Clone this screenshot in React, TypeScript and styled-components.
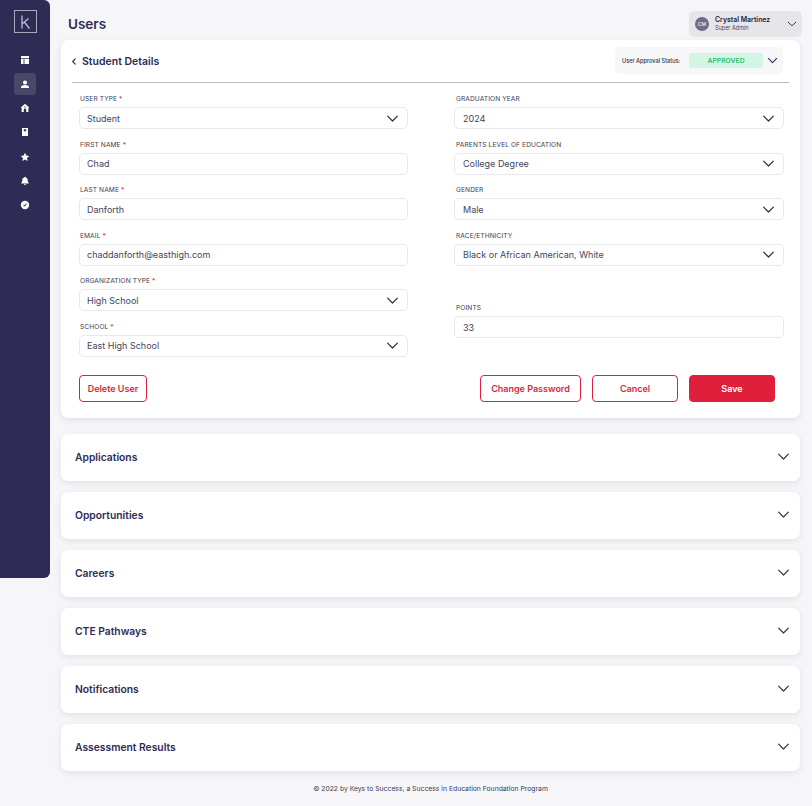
import React from "react";
import styled, { createGlobalStyle } from "styled-components";

const Global = createGlobalStyle`
  html, body { margin: 0; padding: 0; background: #f6f6f9; }
  body { font-family: Inter, "Liberation Sans", sans-serif; color: #2e2c54; }
  * { box-sizing: border-box; }
`;

const Shell = styled.div`
  display: flex;
  width: 812px;
  height: 806px;
  overflow: hidden;
`;
const Sidebar = styled.aside`
  width: 50px;
  height: 578px;
  flex: none;
  background: #2e2c54;
  border-radius: 0 6px 6px 0;
  display: flex;
  flex-direction: column;
  align-items: center;
  padding-top: 10px;
`;
const LogoBox = styled.div`
  width: 23px;
  height: 23px;
  border: 1px solid #a9a8ba;
  display: flex;
  align-items: center;
  justify-content: center;
  margin-bottom: 16px;
`;
const NavList = styled.nav`
  display: flex;
  flex-direction: column;
  align-items: center;
  gap: 1.7px;
`;
const NavItem = styled.div<{ $active?: boolean }>`
  width: 22px;
  height: 22.4px;
  border-radius: 3px;
  display: flex;
  align-items: center;
  justify-content: center;
  background: ${(p) => (p.$active ? "#4a4868" : "transparent")};
`;
const Main = styled.main`
  width: 739px;
  margin-left: 11px;
  flex: none;
  display: flex;
  flex-direction: column;
`;
const TopBar = styled.header`
  height: 40px;
  margin-right: -2px;
  display: flex;
  align-items: flex-start;
  justify-content: space-between;
  padding: 11px 0 0 7px;
`;
const PageTitle = styled.h1`
  margin: 3px 0 0;
  font-size: 13.5px;
  line-height: 20px;
  font-weight: 600;
  color: #2e2c54;
`;
const UserPill = styled.div`
  width: 113px;
  height: 26px;
  background: #e6e6ea;
  border-radius: 5px;
  display: flex;
  align-items: center;
  padding: 0 5px 0 6px;
`;
const Avatar = styled.div`
  width: 14px;
  height: 14px;
  border-radius: 50%;
  background: #6e6c88;
  color: #e6e6ea;
  font-size: 5px;
  font-weight: 600;
  display: flex;
  align-items: center;
  justify-content: center;
  margin-right: 6px;
`;
const UserText = styled.div`
  flex: 1;
  display: flex;
  flex-direction: column;
  gap: 1px;
`;
const UserName = styled.div`
  font-size: 6.9px;
  line-height: 8px;
  font-weight: 600;
  color: #1d1c33;
`;
const UserRole = styled.div`
  font-size: 5.5px;
  line-height: 7px;
  color: #44435c;
`;
const Card = styled.section`
  background: #fff;
  border-radius: 7px;
  box-shadow: 0 2px 6px rgba(40, 40, 70, 0.1);
`;
const DetailsCard = styled(Card)`
  height: 378px;
  padding: 0 11px;
`;
const CardHeader = styled.div`
  height: 43px;
  border-bottom: 1px solid #b9b8c8;
  display: flex;
  align-items: center;
  justify-content: space-between;
`;
const BackTitle = styled.div`
  display: flex;
  align-items: center;
  gap: 6px;
  font-size: 10.5px;
  font-weight: 600;
  color: #2e2c54;
`;
const ApprovalBox = styled.div`
  width: 168px;
  height: 27px;
  margin-right: 6px;
  margin-top: -1px;
  background: #f7f7f9;
  border-radius: 5px;
  display: flex;
  align-items: center;
  padding: 0 5px 0 7px;
`;
const ApprovalLabel = styled.span`
  font-size: 5.6px;
  color: #33324a;
  font-weight: 500;
  width: 67px;
  flex: none;
`;
const ApprovalBadge = styled.span`
  width: 74px;
  height: 15px;
  flex: none;
  background: #d3f5e3;
  color: #2bbf72;
  font-size: 6.8px;
  font-weight: 600;
  border-radius: 3px;
  display: flex;
  align-items: center;
  justify-content: center;
  margin-right: 4px;
`;
const FormGrid = styled.div`
  display: grid;
  grid-template-columns: 329px 330px;
  column-gap: 46px;
  padding: 11px 0 0 7px;
`;
const Column = styled.div`
  display: flex;
  flex-direction: column;
  gap: 10.6px;
`;
const Field = styled.div<{ $push?: number }>`
  margin-top: ${(p) => p.$push ?? 0}px;
`;
const Label = styled.div<{ $inset: number }>`
  height: 13px;
  padding-left: ${(p) => p.$inset}px;
  font-size: 6.6px;
  line-height: 10px;
  color: #3c3b50;
  font-weight: 400;
  letter-spacing: 0.1px;
`;
const Req = styled.span`
  color: #e01e3c;
`;
const Control = styled.div<{ $inset: number }>`
  height: 22px;
  border: 1px solid #e8e8ec;
  border-radius: 5px;
  background: #fff;
  display: flex;
  align-items: center;
  justify-content: space-between;
  padding: 0 8px 0 ${(p) => p.$inset}px;
  font-size: 9px;
  color: #45445a;
`;
const Actions = styled.div`
  display: flex;
  align-items: center;
  margin: 18px 14px 0 7px;
  gap: 11px;
`;
const Button = styled.button<{ $w: number; $solid?: boolean }>`
  width: ${(p) => p.$w}px;
  height: 27px;
  border: 1px solid #df1f3b;
  border-radius: 4px;
  background: ${(p) => (p.$solid ? "#df1f3b" : "#fff")};
  color: ${(p) => (p.$solid ? "#fff" : "#df1f3b")};
  font-family: inherit;
  font-size: 9px;
  font-weight: 600;
  padding: 0;
`;
const Spacer = styled.div`
  flex: 1;
`;
const AccordionList = styled.div`
  margin-top: 16px;
  display: flex;
  flex-direction: column;
  gap: 11px;
`;
const AccordionCard = styled(Card)`
  height: 47px;
  display: flex;
  align-items: center;
  justify-content: space-between;
  padding: 0 10px 3px 14px;
`;
const AccordionTitle = styled.div`
  font-size: 10.3px;
  font-weight: 600;
  color: #2e2c54;
  padding-top: 2px;
`;
const Footer = styled.footer`
  margin-top: 13px;
  text-align: center;
  font-size: 6.8px;
  line-height: 10px;
  color: #3c3b50;
`;

const Chevron = ({ size = 12, color = "#2e2c54" }: { size?: number; color?: string }) => (
  <svg width={size} height={size} viewBox="0 0 12 12" fill="none">
    <path d="M1.5 3.8 6 8.3l4.5-4.5" stroke={color} strokeWidth="1.2" strokeLinecap="round" strokeLinejoin="round" />
  </svg>
);

const icons: React.ReactNode[] = [
  <path key="a" d="M1 1h8v2.200H1zM1 4h2.600v5H1zM4.400 4H9v5H4.400z" />,
  <path key="b" d="M5 1.500a2 2 0 1 1 0 4A2 2 0 0 1 5 1.500zM1 8.500c0-1.600 2-2.400 4-2.400s4 .8 4 2.400V9H1z" />,
  <path key="c" fillRule="evenodd" d="M5 .8 9.200 4.400 8.600 5 8.400 4.900V9H6.200V6.800a1.200 1.200 0 0 0-2.400 0V9H1.600V4.900L1.400 5 .8 4.400zM4.300 3.400v1.200h1.400V3.400z" />,
  <path key="d" fillRule="evenodd" d="M2 1h6v8H2zM3.800 2.200v2h2.400v-2z" />,
  <path key="e" d="m5 .8 1.300 2.800 3 .3-2.300 2 .7 3L5 7.400 2.300 8.900l.7-3-2.300-2 3-.3z" />,
  <path key="f" d="M5 .8c.4 0 .7.3.7.7 1.300.3 2 1.300 2 2.600 0 1.500.4 2 1 2.800v.6H1.300v-.6c.6-.8 1-1.300 1-2.800 0-1.300.7-2.300 2-2.600 0-.4.300-.7.700-.7zM4 8h2a1 1 0 0 1-2 0z" />,
  <path key="g" fillRule="evenodd" d="M5 .8a4.200 4.200 0 1 1 0 8.400A4.200 4.200 0 0 1 5 .8zM3.200 5 4.600 6.400 7 3.900 6.400 3.400 4.600 5.200 3.700 4.400z" />,
];

const leftFields = [
  { label: "USER TYPE", req: true, value: "Student", select: true },
  { label: "FIRST NAME", req: true, value: "Chad" },
  { label: "LAST NAME", req: true, value: "Danforth" },
  { label: "EMAIL", req: true, value: "chaddanforth@easthigh.com" },
  { label: "ORGANIZATION TYPE", req: true, value: "High School", select: true },
  { label: "SCHOOL", req: true, value: "East High School", select: true },
];
const rightFields = [
  { label: "GRADUATION YEAR", value: "2024", select: true },
  { label: "PARENTS LEVEL OF EDUCATION", value: "College Degree", select: true },
  { label: "GENDER", value: "Male", select: true },
  { label: "RACE/ETHNICITY", value: "Black or African American, White", select: true },
  { label: "POINTS", value: "33", push: 27 },
];
const sections = ["Applications", "Opportunities", "Careers", "CTE Pathways", "Notifications", "Assessment Results"];

type F = { label: string; value: string; req?: boolean; select?: boolean; push?: number; right?: boolean };
const FormField = ({ label, value, req, select, push, right }: F) => (
  <Field $push={push}>
    <Label $inset={right ? 2 : 1}>
      {label}
      {req && <Req> *</Req>}
    </Label>
    <Control $inset={right ? 8 : 7}>
      <span>{value}</span>
      {select && <Chevron size={13} color="#33324a" />}
    </Control>
  </Field>
);

export default function App() {
  return (
    <>
      <Global />
      <Shell>
        <Sidebar>
          <LogoBox>
            <svg width="11" height="14" viewBox="0 0 11 14" fill="none" stroke="#bdbcca" strokeWidth="1.300">
              <path d="M2 .5v13M2 9 8.500 3.500M4.300 7 9.500 13.500" />
            </svg>
          </LogoBox>
          <NavList>
            {icons.map((d, i) => (
              <NavItem key={i} $active={i === 1}>
                <svg width="10" height="10" viewBox="0 0 10 10" fill="#fff">
                  {d}
                </svg>
              </NavItem>
            ))}
          </NavList>
        </Sidebar>
        <Main>
          <TopBar>
            <PageTitle>Users</PageTitle>
            <UserPill>
              <Avatar>CM</Avatar>
              <UserText>
                <UserName>Crystal Martinez</UserName>
                <UserRole>Super Admin</UserRole>
              </UserText>
              <Chevron size={10} />
            </UserPill>
          </TopBar>
          <DetailsCard>
            <CardHeader>
              <BackTitle>
                <svg width="4" height="7" viewBox="0 0 4 7" fill="none">
                  <path d="M3.300.8.700 3.500l2.600 2.700" stroke="#2e2c54" strokeWidth="1.100" strokeLinecap="round" strokeLinejoin="round" />
                </svg>
                Student Details
              </BackTitle>
              <ApprovalBox>
                <ApprovalLabel>User Approval Status:</ApprovalLabel>
                <ApprovalBadge>APPROVED</ApprovalBadge>
                <Chevron size={11} />
              </ApprovalBox>
            </CardHeader>
            <FormGrid>
              <Column>
                {leftFields.map((f) => (
                  <FormField key={f.label} {...f} />
                ))}
              </Column>
              <Column>
                {rightFields.map((f) => (
                  <FormField key={f.label} right {...f} />
                ))}
              </Column>
            </FormGrid>
            <Actions>
              <Button $w={68}>Delete User</Button>
              <Spacer />
              <Button $w={101}>Change Password</Button>
              <Button $w={86}>Cancel</Button>
              <Button $w={86} $solid>
                Save
              </Button>
            </Actions>
          </DetailsCard>
          <AccordionList>
            {sections.map((s) => (
              <AccordionCard key={s}>
                <AccordionTitle>{s}</AccordionTitle>
                <Chevron size={13} color="#3c3b50" />
              </AccordionCard>
            ))}
          </AccordionList>
          <Footer>© 2022 by Keys to Success, a Success in Education Foundation Program</Footer>
        </Main>
      </Shell>
    </>
  );
}
